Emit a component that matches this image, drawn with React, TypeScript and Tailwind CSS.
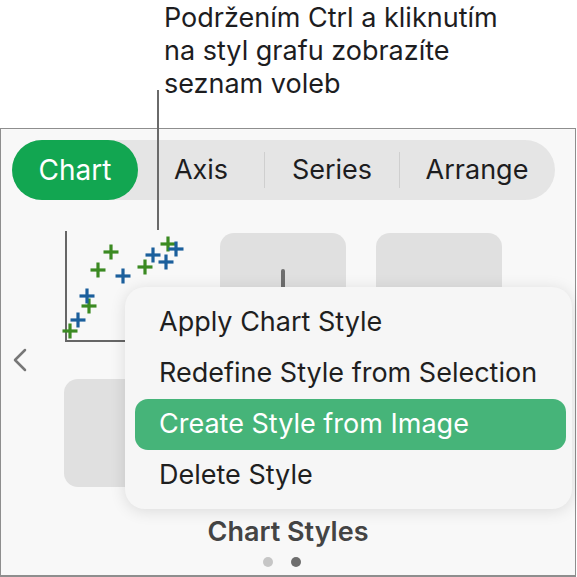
import React from "react";

const greens: [number, number][] = [
  [6, 100], [25, 75], [34, 39], [47, 21], [81, 36], [104, 13],
];
const blues: [number, number][] = [
  [14, 89], [23, 65], [59, 45], [89, 24], [102, 31], [112, 18],
];

const Plus = ({ x, y, color }: { x: number; y: number; color: string }) => (
  <g stroke={color} strokeWidth={3.2}>
    <line x1={x - 7.5} y1={y} x2={x + 7.5} y2={y} />
    <line x1={x} y1={y - 7.5} x2={x} y2={y + 7.5} />
  </g>
);

const Scatter = () => (
  <svg width={126} height={112} viewBox="0 0 126 112" overflow="visible">
    <path d="M2 0 V110 H126" fill="none" stroke="#666" strokeWidth={2} />
    {greens.map(([x, y], i) => (
      <Plus key={"g" + i} x={x} y={y} color="#3b8a22" />
    ))}
    {blues.map(([x, y], i) => (
      <Plus key={"b" + i} x={x} y={y} color="#1b5f9c" />
    ))}
  </svg>
);

const tabs = ["Axis", "Series", "Arrange"];
const items = [
  "Apply Chart Style",
  "Redefine Style from Selection",
  "Create Style from Image",
  "Delete Style",
];

export default function App() {
  return (
    <div
      className="relative w-[577px] h-[577px] bg-white overflow-hidden"
      style={{ fontFamily: "Inter, 'Noto Sans', sans-serif" }}
    >
      <div className="h-[128px] pl-[164px] pt-[1px] text-[27px] leading-[33px] text-[#1d1d1f]">
        <p>Podržením Ctrl a kliknutím</p>
        <p>na styl grafu zobrazíte</p>
        <p>seznam voleb</p>
      </div>

      <div className="relative h-[449px] w-[576px] border border-b-2 border-[#8e8e8e] bg-[#f8f8f8]">
        <div className="ml-[11px] mt-[11px] flex h-[60px] w-[543px] items-center rounded-full bg-[#e5e5e5]">
          <div className="flex h-[60px] w-[126px] items-center justify-center rounded-full bg-[#12a651] text-[28px] text-white">
            Chart
          </div>
          {tabs.map((t, i) => (
            <React.Fragment key={t}>
              {i > 0 && <div className="h-[36px] w-px bg-[#cfcfcf]" />}
              <div
                className={`flex items-center justify-center text-[27px] text-[#1d1d1f] ${
                  i === 0 ? "w-[126px]" : i === 1 ? "w-[134px]" : "w-[154px]"
                }`}
              >
                {t}
              </div>
            </React.Fragment>
          ))}
        </div>

        <div className="mt-[33px] flex">
          <div className="flex w-[63px] items-center pl-[11px]">
            <svg width={16} height={24} viewBox="0 0 16 24">
              <path d="M13 2 L3 12 L13 22" fill="none" stroke="#777" strokeWidth={2.5} strokeLinecap="round" strokeLinejoin="round" />
            </svg>
          </div>
          <div className="grid grid-cols-[126px_126px_126px] grid-rows-[108px_108px] gap-x-[30px] gap-y-[38px]">
            <div className="-mt-[2px]">
              <Scatter />
            </div>
            <div className="flex justify-center rounded-[14px] bg-[#e0e0e0] pt-[36px]">
              <div className="h-[40px] w-[4px] rounded-full bg-[#6e6e6e]" />
            </div>
            <div className="rounded-[14px] bg-[#e0e0e0]" />
            <div className="rounded-[14px] bg-[#e0e0e0]" />
            <div className="rounded-[14px] bg-[#e0e0e0]" />
            <div className="rounded-[14px] bg-[#e0e0e0]" />
          </div>
        </div>

        <div className="mt-[29px] text-center text-[27px] leading-[32px] font-semibold text-[#444]">
          Chart Styles
        </div>
        <div className="mt-[9px] flex justify-center gap-[18px] pr-[12px]">
          <div className="h-[10px] w-[10px] rounded-full bg-[#c6c6c6]" />
          <div className="h-[10px] w-[10px] rounded-full bg-[#6e6e6e]" />
        </div>

        <div className="absolute left-[124px] top-[158px] w-[447px] rounded-[20px] bg-[#f6f6f6] pb-[8px] pl-[10px] pr-[6px] pt-[10px] shadow-[0_2px_16px_rgba(0,0,0,0.12)]">
          {items.map((it, i) => (
            <div
              key={it}
              className={`flex h-[51px] items-center rounded-[13px] pl-[24px] text-[27px] ${
                i === 2 ? "bg-[#46b479] text-white" : "text-[#1f1f1f]"
              }`}
            >
              {it}
            </div>
          ))}
        </div>
      </div>

      <div className="absolute left-[157px] top-[90px] h-[140px] w-[2px] bg-[#6a6a6a]" />
    </div>
  );
}
